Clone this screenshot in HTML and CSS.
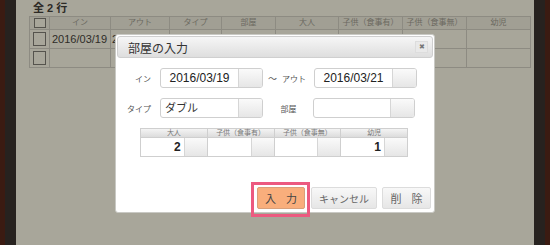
FILE: index.html
```html
<!DOCTYPE html>
<html lang="ja">
<head>
    <meta charset="UTF-8">
    <meta name="viewport" content="width=device-width, initial-scale=1.0">
    <title>部屋の入力</title>
    <link rel="stylesheet" href="styles.css">
</head>
<body>
    <div class="edge-brown"></div>
    <div class="edge-dark"></div>
    <div class="page">
        <div class="count">全 2 行</div>
        <table class="list">
            <thead>
                <tr>
                    <th class="col-check"><span class="check small"></span></th>
                    <th class="col-in">イン</th>
                    <th class="col-out">アウト</th>
                    <th class="col-type">タイプ</th>
                    <th class="col-room">部屋</th>
                    <th class="col-adult">大人</th>
                    <th class="col-child">子供（食事有）</th>
                    <th class="col-child">子供（食事無）</th>
                    <th class="col-child">幼児</th>
                </tr>
            </thead>
            <tbody>
                <tr>
                    <td><span class="check"></span></td>
                    <td>2016/03/19</td>
                    <td>2</td>
                    <td></td>
                    <td></td>
                    <td></td>
                    <td></td>
                    <td></td>
                    <td></td>
                </tr>
                <tr>
                    <td><span class="check"></span></td>
                    <td></td>
                    <td></td>
                    <td></td>
                    <td></td>
                    <td></td>
                    <td></td>
                    <td></td>
                    <td></td>
                </tr>
            </tbody>
        </table>
    </div>
    <div class="edge-dark"></div>
    <div class="edge-brown"></div>

    <div class="dialog">
        <div class="dialog-title">
            <span>部屋の入力</span>
            <span class="close">&#x2716;</span>
        </div>
        <div class="dialog-body">
            <div class="form-row">
                <label class="label">イン</label>
                <div class="field"><span class="field-text">2016/03/19</span><span class="field-btn"></span></div>
                <div class="label-mid split"><span class="wave">〜</span><span>アウト</span></div>
                <div class="field"><span class="field-text">2016/03/21</span><span class="field-btn"></span></div>
            </div>
            <div class="form-row">
                <label class="label">タイプ</label>
                <div class="field"><span class="field-text left">ダブル</span><span class="field-btn"></span></div>
                <div class="label-mid">部屋</div>
                <div class="field narrow"><span class="field-text"></span><span class="field-btn"></span></div>
            </div>
            <div class="guests">
                <div class="guest">
                    <div class="guest-head">大人</div>
                    <div class="guest-cell"><span class="guest-val">2</span><span class="guest-btn"></span></div>
                </div>
                <div class="guest">
                    <div class="guest-head">子供（食事有）</div>
                    <div class="guest-cell"><span class="guest-val"></span><span class="guest-btn"></span></div>
                </div>
                <div class="guest">
                    <div class="guest-head">子供（食事無）</div>
                    <div class="guest-cell"><span class="guest-val"></span><span class="guest-btn"></span></div>
                </div>
                <div class="guest">
                    <div class="guest-head">幼児</div>
                    <div class="guest-cell"><span class="guest-val">1</span><span class="guest-btn"></span></div>
                </div>
            </div>
            <div class="actions">
                <button class="btn btn-ok">入 力</button>
                <button class="btn btn-cancel">キャンセル</button>
                <button class="btn btn-delete">削 除</button>
            </div>
        </div>
    </div>
    <div class="focus-ring"></div>
</body>
</html>
```

FILE: styles.css
```css
html, body {
    margin: 0;
    height: 245px;
    overflow: hidden;
}
body {
    display: flex;
    font-family: "Liberation Sans", "Noto Sans CJK JP", sans-serif;
    background-color: #2a2321;
}
.edge-brown {
    width: 5px;
    background-color: #3b1b12;
}
.edge-dark {
    width: 11px;
    background-color: #27221f;
}
.page {
    flex: 1;
    background-color: #a8a69a;
    padding: 0 0 0 13px;
}
.count {
    font-size: 11px;
    font-weight: bold;
    color: #2c2a26;
    height: 16px;
    line-height: 16px;
    padding-left: 4px;
}
table.list {
    border-collapse: collapse;
    table-layout: fixed;
    width: 492px;
}
.list th, .list td {
    border: 1px solid #8d8b82;
    padding: 0;
    overflow: hidden;
    white-space: nowrap;
}
.list th {
    height: 12px;
    font-size: 8px;
    font-weight: normal;
    color: #6b6960;
    background-color: #a19f94;
    text-align: center;
    line-height: 12px;
}
.list td {
    height: 18px;
    font-size: 11px;
    color: #2e2c28;
    padding-left: 2px;
}
.col-check { width: 19px; }
.col-in { width: 60px; }
.col-out { width: 58px; }
.col-type { width: 51px; }
.col-room { width: 53px; }
.col-adult { width: 62px; }
.col-child { width: 63px; }
.check {
    display: block;
    width: 11px;
    height: 12px;
    border: 1px solid #55534d;
    margin: 0 auto;
    background-color: #a8a69a;
}
.check.small {
    width: 10px;
    height: 8px;
}
.list td:first-child {
    padding-left: 0;
}
.list td:nth-child(3) {
    padding-left: 1px;
}

/* ダイアログ */
.dialog {
    position: absolute;
    left: 115px;
    top: 34px;
    width: 318px;
    height: 177px;
    background: #fff;
    border: 1px solid #c9c9c4;
    border-radius: 3px;
    display: flex;
    flex-direction: column;
}
.dialog-title {
    margin: 1px 1px 0 1px;
    height: 20px;
    border: 1px solid #cfcfcf;
    border-radius: 3px;
    background: linear-gradient(#f6f6f6, #dedede);
    display: flex;
    align-items: center;
    justify-content: space-between;
    padding: 0 4px 0 10px;
    font-size: 12px;
    color: #333;
}
.close {
    width: 11px;
    height: 10px;
    background: #e9e9e9;
    border: 1px solid #ddd;
    font-size: 7px;
    line-height: 10px;
    text-align: center;
    color: #777;
}
.dialog-body {
    padding: 10px 0 0 0;
    display: flex;
    flex-direction: column;
    flex: 1;
}
.form-row {
    display: flex;
    align-items: center;
    height: 20px;
    margin-bottom: 10px;
}
.label {
    width: 35px;
    text-align: right;
    font-size: 8px;
    color: #555;
    margin-right: 9px;
}
.label-mid {
    width: 51px;
    font-size: 8px;
    color: #555;
    text-align: center;
}
.label-mid.split {
    display: flex;
    justify-content: space-between;
    align-items: center;
    padding: 0 8px 0 5px;
    width: 38px;
}
.wave {
    font-size: 9px;
}
.field {
    display: flex;
    width: 101px;
    height: 18px;
    border: 1px solid #cfcfcf;
    border-radius: 3px;
    overflow: hidden;
}
.field.narrow {
    width: 100px;
    margin-left: -1px;
}
.field-text {
    flex: 1;
    font-size: 12px;
    color: #222;
    line-height: 18px;
    text-align: center;
}
.field-text.left {
    text-align: left;
    padding-left: 4px;
    font-size: 11px;
    color: #333;
}
.field-btn {
    width: 23px;
    border-left: 1px solid #d6d6d6;
    background: linear-gradient(#fafafa, #e6e6e6);
}
.guests {
    display: flex;
    margin-left: 24px;
    width: 266px;
    border: 1px solid #cfcfcf;
}
.guest {
    flex: 1;
    border-right: 1px solid #cfcfcf;
}
.guest:last-child {
    border-right: none;
}
.guest-head {
    height: 8px;
    line-height: 8px;
    font-size: 7px;
    color: #777;
    text-align: center;
    background: linear-gradient(#f4f4f4, #dcdcdc);
    border-bottom: 1px solid #cfcfcf;
}
.guest-cell {
    display: flex;
    height: 18px;
}
.guest-val {
    flex: 1;
    font-size: 12px;
    font-weight: bold;
    color: #222;
    text-align: right;
    line-height: 18px;
    padding-right: 3px;
}
.guest-btn {
    width: 22px;
    border-left: 1px solid #d6d6d6;
    background: linear-gradient(#fafafa, #e6e6e6);
}
.actions {
    margin-top: auto;
    display: flex;
    justify-content: flex-end;
    padding: 0 3px 3px 0;
}
.btn {
    height: 22px;
    border: 1px solid #dcdcdc;
    border-radius: 2px;
    background: linear-gradient(#f8f8f8, #e6e6e6);
    font-family: "Liberation Sans", "Noto Sans CJK JP", sans-serif;
    font-size: 10px;
    color: #666;
    padding: 0;
    margin-left: 6px;
}
.btn-ok {
    width: 48px;
    background: #f9ae7c;
    border-color: #d9a07a;
    color: #444;
    font-size: 11px;
    word-spacing: 7px;
}
.btn-cancel {
    width: 66px;
}
.btn-delete {
    width: 49px;
    margin-left: 5px;
    font-size: 11px;
    word-spacing: 7px;
}
.focus-ring {
    position: absolute;
    left: 251px;
    top: 182px;
    width: 53px;
    height: 29px;
    border: 3px solid #ec5a80;
}
```
